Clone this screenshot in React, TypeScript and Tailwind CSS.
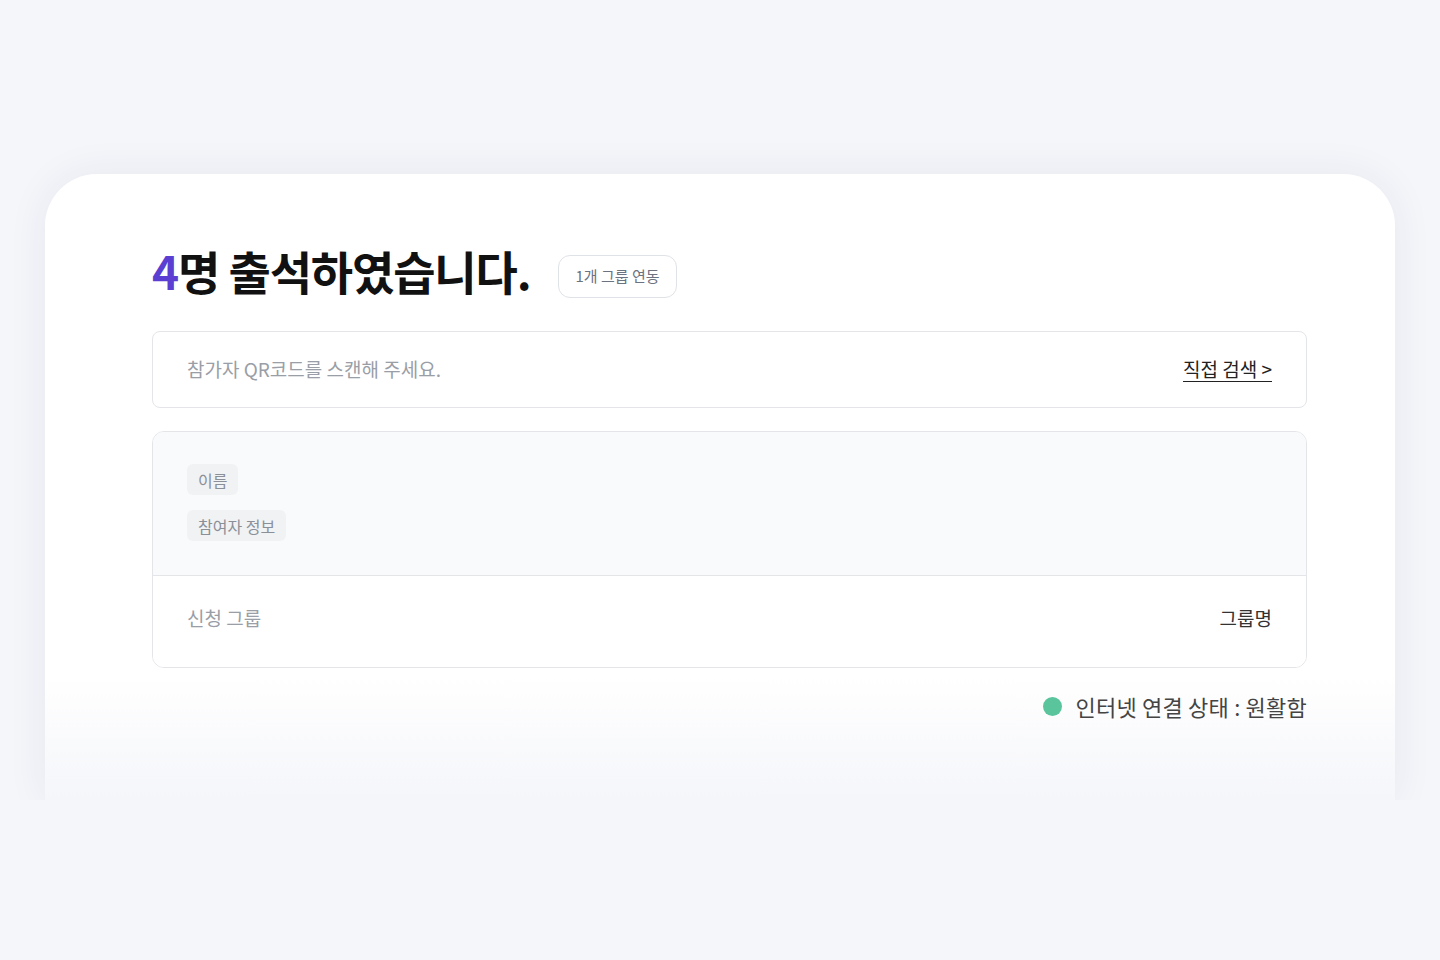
import React from "react";

const font = { fontFamily: '"Noto Sans CJK KR", "Noto Sans", sans-serif' };

export default function App() {
  return (
    <div className="min-h-[960px] w-full bg-[#f5f6fa]" style={font}>
      <div className="h-[800px] overflow-hidden px-[45px] pt-[174px]">
        <div className="h-[626px] rounded-t-[52px] bg-[linear-gradient(to_bottom,#ffffff_0%,#ffffff_80%,#f5f6fa_100%)] shadow-[0_0_40px_rgba(30,40,80,0.07)] pl-[107px] pr-[88px] pt-[67px]">
          <div className="flex items-center gap-[28px]">
            <h1 className="text-[46px] font-bold leading-[56px] tracking-[-0.025em] text-[#111]">
              <span className="text-[#5b3fd2]">4</span>명 출석하였습니다.
            </h1>
            <span className="mt-[14px] inline-flex h-[43px] items-center rounded-[12px] border border-[#dfe2e7] px-[16px] text-[15px] text-[#6b7280]">
              1개 그룹 연동
            </span>
          </div>

          <div className="mt-[33px] flex h-[77px] items-center justify-between rounded-[8px] border border-[#e3e5e8] px-[34px]">
            <span className="text-[19px] text-[#9a9ea6]">참가자 QR코드를 스캔해 주세요.</span>
            <span className="text-[19px] text-[#222] underline underline-offset-[4px]">직접 검색 &gt;</span>
          </div>

          <div className="mt-[23px] overflow-hidden rounded-[12px] border border-[#e3e5e8]">
            <div className="flex h-[144px] flex-col items-start gap-[15px] border-b border-[#e3e5e8] bg-[#f9fafb] px-[34px] pt-[32px]">
              <span className="inline-flex h-[31px] items-center rounded-[6px] bg-[#f1f2f4] px-[11px] text-[16px] text-[#8a8f98]">이름</span>
              <span className="inline-flex h-[31px] items-center rounded-[6px] bg-[#f1f2f4] px-[11px] text-[16px] text-[#8a8f98]">참여자 정보</span>
            </div>
            <div className="flex h-[91px] items-center justify-between bg-white px-[34px] pb-[7px]">
              <span className="text-[19px] text-[#9a9ea6]">신청 그룹</span>
              <span className="text-[19px] text-[#333]">그룹명</span>
            </div>
          </div>

          <div className="mt-[22px] flex items-center justify-end gap-[13px]">
            <span className="h-[19px] w-[19px] rounded-full bg-[#5ac49d]" />
            <span className="text-[22px] tracking-[0.01em] text-[#444]">인터넷 연결 상태 : 원활함</span>
          </div>
        </div>
      </div>
    </div>
  );
}
